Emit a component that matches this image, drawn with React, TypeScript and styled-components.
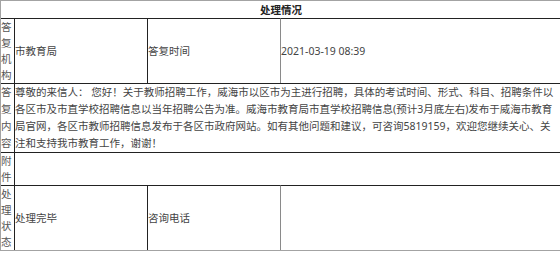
import React from 'react';
import styled, { createGlobalStyle } from 'styled-components';

const GlobalStyle = createGlobalStyle`
  html, body {
    margin: 0;
    padding: 0;
    overflow: hidden;
    background: #fff;
  }
`;

const Table = styled.table`
  width: 562px;
  table-layout: fixed;
  border-collapse: separate;
  border-spacing: 0;
  border: 1px solid #a3a3a3;
  font-family: "Noto Sans", "Noto Sans CJK SC", sans-serif;
  font-size: 10.5px;
  line-height: 16px;
  color: #444;
`;

const Title = styled.th`
  height: 17px;
  padding: 0;
  font-weight: bold;
  color: #222;
  text-align: center;
  vertical-align: middle;
`;

const Label = styled.td<{ $lh?: number }>`
  padding: 0;
  border-top: 1px solid #222;
  line-height: ${(p) => p.$lh || 16}px;
  word-break: break-all;
  vertical-align: middle;
  color: #555;
`;

const Cell = styled.td<{ $soft?: boolean; $lh?: number }>`
  padding: 0;
  border-top: 1px solid #222;
  border-left: 1px solid ${(p) => (p.$soft ? '#8a8a8a' : '#222')};
  line-height: ${(p) => p.$lh || 16}px;
  vertical-align: middle;
  word-break: break-all;
`;

export default function App() {
  return (
    <>
      <GlobalStyle />
      <Table>
        <colgroup>
          <col style={{ width: 13 }} />
          <col style={{ width: 133 }} />
          <col style={{ width: 133 }} />
          <col />
        </colgroup>
        <tbody>
          <tr>
            <Title colSpan={4}>处理情况</Title>
          </tr>
          <tr>
            <Label>答复机构</Label>
            <Cell>市教育局</Cell>
            <Cell>答复时间</Cell>
            <Cell $soft>2021-03-19 08:39</Cell>
          </tr>
          <tr>
            <Label $lh={17}>答复内容</Label>
            <Cell colSpan={3} $lh={17}>
              尊敬的来信人： 您好！关于教师招聘工作，威海市以区市为主进行招聘，具体的考试时间、形式、科目、招聘条件以各区市及市直学校招聘信息以当年招聘公告为准。威海市教育局市直学校招聘信息(预计3月底左右)发布于威海市教育局官网，各区市教师招聘信息发布于各区市政府网站。如有其他问题和建议，可咨询5819159，欢迎您继续关心、关注和支持我市教育工作，谢谢！
            </Cell>
          </tr>
          <tr>
            <Label>附件</Label>
            <Cell colSpan={3}></Cell>
          </tr>
          <tr>
            <Label>处理状态</Label>
            <Cell>处理完毕</Cell>
            <Cell>咨询电话</Cell>
            <Cell $soft></Cell>
          </tr>
        </tbody>
      </Table>
    </>
  );
}
